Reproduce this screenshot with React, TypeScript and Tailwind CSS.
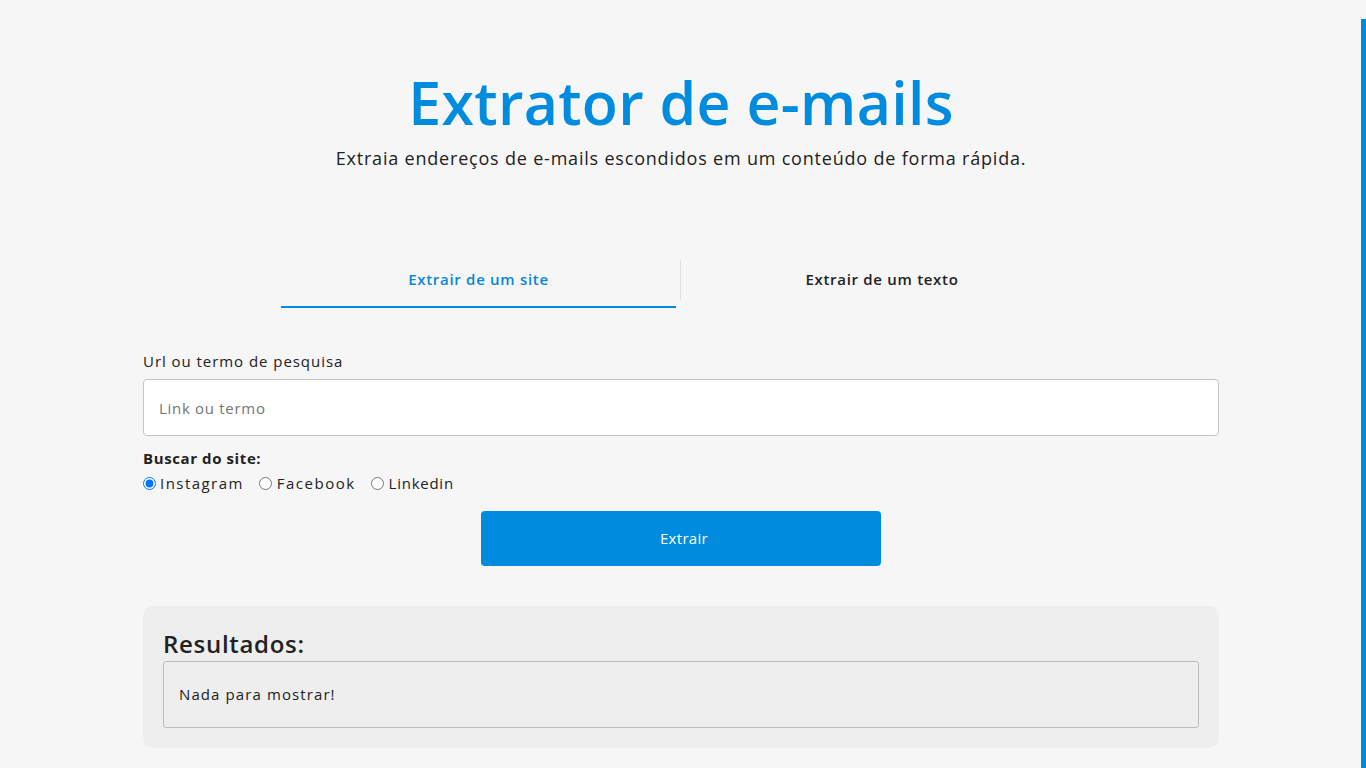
import React from "react";

export default function App() {
  return (
    <div
      className="min-h-screen w-full bg-[#f6f6f6] text-[#222]"
      style={{ fontFamily: '"Open Sans", "Noto Sans", sans-serif' }}
    >
      <div className="fixed right-0 top-[19px] bottom-0 w-[5px] bg-[#008cde]" />
      <div className="mx-auto w-[1076px] pt-[66px] relative left-[-2px]">
        <h1 className="text-center text-[59px] font-semibold leading-[72px] tracking-[0.3px] text-[#008cde]">
          Extrator de e-mails
        </h1>
        <p className="mt-[7px] text-center text-[18px] leading-[26px] tracking-[0.8px] text-[#222]">
          Extraia endereços de e-mails escondidos em um conteúdo de forma rápida.
        </p>

        <div className="mt-[82px] flex justify-center">
          <div className="flex w-[804px]">
            <div className="flex w-[401px] flex-col pl-[2px] pr-[4px]">
              <div className="flex h-[53px] w-full items-center justify-center text-[15px] font-semibold tracking-[0.7px] text-[#0a86d8]">
                Extrair de um site
              </div>
              <div className="h-[2px] w-full bg-[#008cde]" />
            </div>
            <div className="mt-[7px] h-[40px] w-px bg-[#e0e0e0]" />
            <div className="flex w-[402px] flex-col">
              <div className="flex h-[53px] w-full items-center justify-center text-[15px] font-semibold tracking-[0.7px] text-[#222]">
                Extrair de um texto
              </div>
            </div>
          </div>
        </div>

        <div className="mt-[41px] text-[15px] leading-[24px] tracking-[0.95px]">Url ou termo de pesquisa</div>
        <input
          className="mt-[6px] block h-[57px] w-full rounded-[4px] border border-[#c4c4c4] bg-white px-[15px] text-[15px] tracking-[0.7px] text-[#222] outline-none placeholder:text-[#757575]"
          placeholder="Link ou termo"
        />
        <div className="mt-[11px] text-[15px] font-bold leading-[22px] tracking-[0.6px]">Buscar do site:</div>
        <div className="mt-[3px] flex items-center text-[15px] leading-[22px]">
          <label className="flex items-center">
            <input type="radio" name="site" defaultChecked className="m-0 h-[13px] w-[13px] accent-[#0075ff]" />
            <span className="ml-[4px] tracking-[1.45px]">Instagram</span>
          </label>
          <label className="ml-[15px] flex items-center">
            <input type="radio" name="site" className="m-0 h-[13px] w-[13px]" />
            <span className="ml-[5px] tracking-[1.5px]">Facebook</span>
          </label>
          <label className="ml-[15px] flex items-center">
            <input type="radio" name="site" className="m-0 h-[13px] w-[13px]" />
            <span className="ml-[5px] tracking-[0.75px]">Linkedin</span>
          </label>
        </div>
        <div className="mt-[17px] flex justify-center">
          <button className="h-[55px] w-[400px] rounded-[4px] bg-[#008cde] pl-[6px] text-[15px] font-medium tracking-[0.3px] text-white">
            Extrair
          </button>
        </div>

        <div className="mt-[40px] rounded-[10px] bg-[#eeeeee] px-[20px] pb-[20px] pt-[22px]">
          <h2 className="text-[24px] font-semibold leading-[32px] tracking-[0.7px] text-[#222]">Resultados:</h2>
          <div className="mt-[1px] flex h-[67px] items-center rounded-[3px] border border-[#bdbdbd] px-[15px] text-[15px] tracking-[1.1px]">
            Nada para mostrar!
          </div>
        </div>
      </div>
    </div>
  );
}
